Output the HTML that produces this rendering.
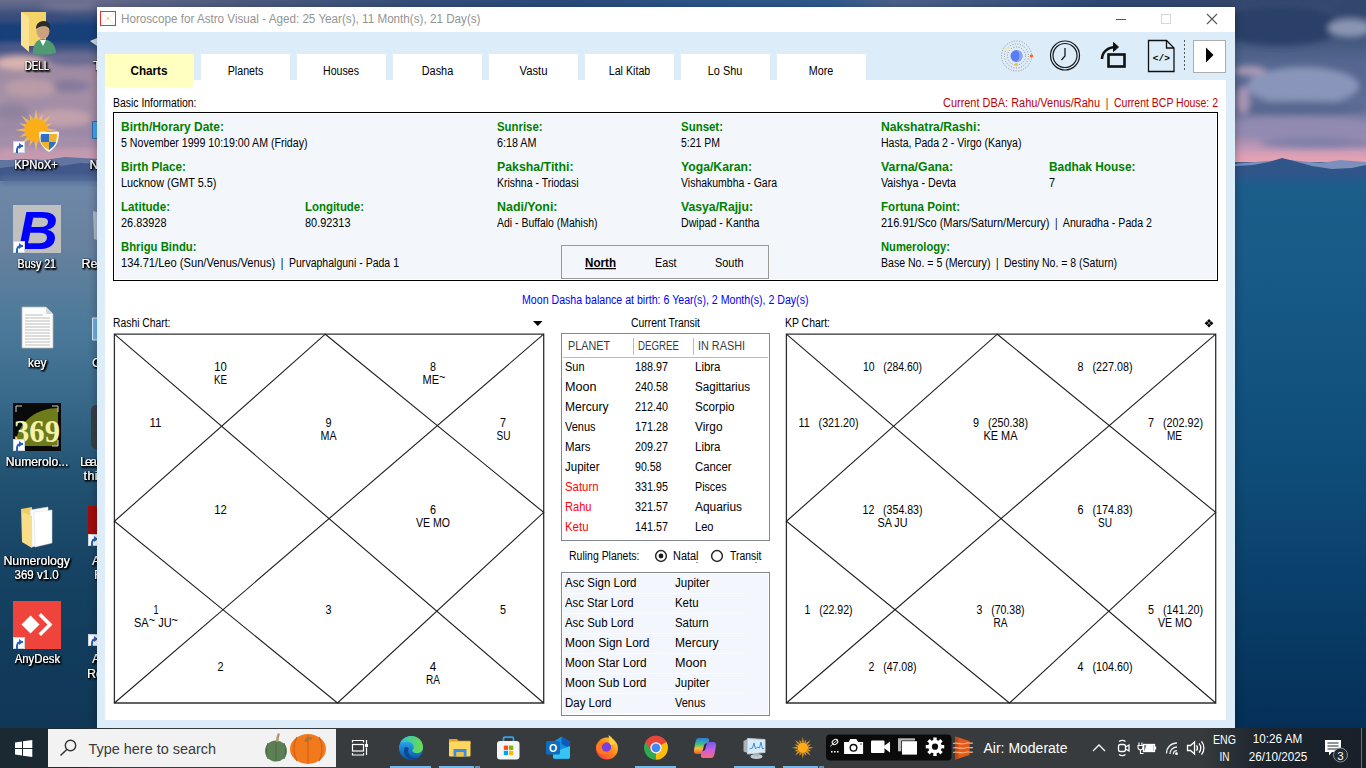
<!DOCTYPE html>
<html lang="en">
<head>
<meta charset="utf-8">
<title>Horoscope for Astro Visual</title>
<style>
*{box-sizing:border-box;margin:0;padding:0}
html,body{width:1366px;height:768px;overflow:hidden;background:#1b4a70;font-family:"Liberation Sans",sans-serif}
#screen{position:relative;width:1366px;height:768px;overflow:hidden}
.abs{position:absolute}
/* desktop wallpaper */
#wallL{left:0;top:0;width:100px;height:728px;overflow:hidden;background:#3a688e}
#wallR{left:1235px;top:0;width:131px;height:728px;overflow:hidden;background:#16547f}
.blob{position:absolute;border-radius:50%;filter:blur(6px)}
/* desktop icons */
.dlabel{position:absolute;color:#fff;font-size:12px;line-height:15px;text-align:center;white-space:nowrap;
 text-shadow:0 1px 2px #000,0 0 3px rgba(0,0,0,.9),1px 1px 1px rgba(0,0,0,.8)}
.sc{position:absolute;width:12px;height:12px;background:#fff;border:1px solid #d0d6de}
.sc:before{content:"";position:absolute;left:2px;top:3px;width:5px;height:6px;border-top:2px solid #2a62b8;border-left:2px solid #2a62b8;border-radius:5px 0 0 0}
.sc:after{content:"";position:absolute;left:5px;top:1px;width:0;height:0;border-left:4px solid #2a62b8;border-top:3px solid transparent;border-bottom:3px solid transparent}
/* app window */
#win{left:97px;top:7px;width:1138px;height:721px;background:#dcecf9;z-index:1;box-shadow:0 1px 9px rgba(0,0,0,.32)}
#wintext{z-index:2}
#taskbar{z-index:3}
#titlebar{left:0;top:0;width:1138px;height:25px;background:#fff}
#content{left:8px;top:73px;width:1121px;height:640px;background:#fff}
.tab{position:absolute;top:47px;width:89px;height:26px;background:#fff}
.tab.sel{height:33px;background:#ffffbf;z-index:3}
#infobox{left:16px;top:105px;width:1105px;height:169px;border:1px solid #000;background:#f3f7fc;box-shadow:inset 0 0 0 1px #fff}
#dirbox{left:464px;top:238px;width:208px;height:34px;border:1px solid #9a9a9a;background:#f3f7fc}
#ttable{left:464px;top:326px;width:209px;height:208px;border:1px solid #828790;background:#fff}
#rtable{left:464px;top:565px;width:209px;height:144px;border:1px solid #828790;background:#f3f6fc;box-shadow:inset 0 0 0 1px #fff}
.rline{position:absolute;left:2px;width:179px;height:1px;background:#fbfdff}
.radio{position:absolute;width:13px;height:13px;border:1px solid #333;border-radius:50%;background:#fff}
.radio.on:after{content:"";position:absolute;left:3px;top:3px;width:5px;height:5px;border-radius:50%;background:#222}
#playbtn{left:1096px;top:33px;width:33px;height:33px;background:#fff;border:1px solid #adadad}
/* taskbar */
#taskbar{left:0;top:728px;width:1366px;height:40px;background:linear-gradient(90deg,#1a2932 0px,#1a2932 75px,#373b3d 125px,#373b3d 1200px,#1c242e 1262px,#182029 1366px)}
#search{left:48px;top:1px;width:288px;height:38px;background:#f2f2f2}
.run{position:absolute;top:38px;height:2px;background:#76b9ed}
svg{position:absolute;left:0;top:0;overflow:visible}
svg text{font-family:"Liberation Sans",sans-serif;white-space:pre}
</style>
</head>
<body>
<div id="screen">

<!-- ===== Desktop wallpaper ===== -->
<div id="wallL" class="abs">
  <svg width="100" height="728" viewBox="0 0 100 728">
    <defs>
      <filter id="c3" x="-30%" y="-30%" width="160%" height="160%"><feGaussianBlur stdDeviation="3"/></filter>
      <filter id="c6" x="-30%" y="-30%" width="160%" height="160%"><feGaussianBlur stdDeviation="6"/></filter>
      <linearGradient id="skyL" x1="0" y1="0" x2="0" y2="1">
        <stop offset="0" stop-color="#6a6d8d"/><stop offset=".07" stop-color="#4c5a82"/><stop offset=".16" stop-color="#18417b"/>
        <stop offset=".25" stop-color="#173f78"/><stop offset=".33" stop-color="#56608a"/><stop offset=".4" stop-color="#9e8aa2"/>
        <stop offset=".6" stop-color="#a58fa6"/><stop offset=".85" stop-color="#9a88a6"/><stop offset=".95" stop-color="#b894ac"/><stop offset="1" stop-color="#c69ab0"/>
      </linearGradient>
      <linearGradient id="seaL" x1="0" y1="0" x2="0" y2="1">
        <stop offset="0" stop-color="#6f88a9"/><stop offset=".12" stop-color="#67819f"/><stop offset=".27" stop-color="#4b7999"/>
        <stop offset=".4" stop-color="#38698a"/><stop offset=".55" stop-color="#215171"/><stop offset=".7" stop-color="#174464"/>
        <stop offset=".85" stop-color="#123c5c"/><stop offset="1" stop-color="#103756"/>
      </linearGradient>
    </defs>
    <rect x="0" y="0" width="100" height="160" fill="url(#skyL)"/>
    <g filter="url(#c3)">
      <ellipse cx="20" cy="63" rx="24" ry="7" fill="#d9b3b1"/>
      <ellipse cx="75" cy="60" rx="25" ry="6" fill="#6a6c93"/>
      <ellipse cx="68" cy="86" rx="22" ry="6" fill="#84799b"/>
      <ellipse cx="30" cy="88" rx="26" ry="9" fill="#b99ca8"/>
      <ellipse cx="62" cy="118" rx="30" ry="9" fill="#c2a0ac"/>
      <ellipse cx="12" cy="112" rx="16" ry="8" fill="#8d829f"/>
      <ellipse cx="40" cy="140" rx="50" ry="6" fill="#a48fa9"/>
      <ellipse cx="30" cy="17" rx="40" ry="4" fill="#3a4c78"/>
      <ellipse cx="70" cy="6" rx="30" ry="3" fill="#7a7a98"/>
      <ellipse cx="15" cy="47" rx="22" ry="4" fill="#50598a"/>
    </g>
    <rect x="0" y="150" width="100" height="9" fill="#c89cb2" opacity=".8" filter="url(#c3)"/>
    <path d="M0 161l20-2 25 1 20-3 35 2v24h-100z" fill="#62749f"/>
    <path d="M0 168l25-3 30 2 25-4 20 1v20h-100z" fill="#41598a"/>
    <rect x="0" y="181" width="100" height="547" fill="url(#seaL)"/>
    <rect x="0" y="177" width="100" height="7" fill="#566f98" filter="url(#c3)"/>
  </svg>
</div>
<div id="wallR" class="abs">
  <svg width="131" height="728" viewBox="1235 0 131 728">
    <defs>
      <filter id="b3" x="-30%" y="-30%" width="160%" height="160%"><feGaussianBlur stdDeviation="3"/></filter>
      <filter id="b5" x="-30%" y="-30%" width="160%" height="160%"><feGaussianBlur stdDeviation="5"/></filter>
      <linearGradient id="skyR" x1="0" y1="0" x2="0" y2="1">
        <stop offset="0" stop-color="#34486f"/><stop offset=".25" stop-color="#44587f"/><stop offset=".38" stop-color="#54668f"/>
        <stop offset=".62" stop-color="#5d6c96"/><stop offset=".8" stop-color="#8c86ad"/><stop offset=".93" stop-color="#c79bb6"/><stop offset="1" stop-color="#eaa2b2"/>
      </linearGradient>
      <linearGradient id="seaR" x1="0" y1="0" x2="0" y2="1">
        <stop offset="0" stop-color="#1b5e8a"/><stop offset=".15" stop-color="#195b88"/><stop offset=".35" stop-color="#125380"/>
        <stop offset=".55" stop-color="#0e4b77"/><stop offset=".8" stop-color="#083c66"/><stop offset="1" stop-color="#052f57"/>
      </linearGradient>
    </defs>
    <rect x="1235" y="0" width="131" height="162" fill="url(#skyR)"/>
    <g filter="url(#b3)">
      <ellipse cx="1280" cy="26" rx="62" ry="20" fill="#2b3f67"/>
      <ellipse cx="1350" cy="28" rx="22" ry="9" fill="#8a95b2"/>
      <ellipse cx="1360" cy="8" rx="30" ry="9" fill="#33476e"/>
      <ellipse cx="1303" cy="86" rx="56" ry="19" fill="#8995ba"/>
      <ellipse cx="1250" cy="71" rx="16" ry="5" fill="#a99ab6"/>
      <ellipse cx="1300" cy="108" rx="70" ry="7" fill="#566890"/>
      <ellipse cx="1300" cy="128" rx="80" ry="11" fill="#928ab1"/>
      <ellipse cx="1320" cy="143" rx="60" ry="5" fill="#7f7fa8"/>
      <ellipse cx="1243" cy="100" rx="7" ry="14" fill="#a994b4"/>
    </g>
    <rect x="1235" y="154" width="131" height="7" fill="#e3a1b4" opacity=".7" filter="url(#b3)"/>
    <path d="M1235 164l30-3 25-1 30 3 20-3 26 2v22h-131z" fill="#7d8fbd"/>
    <path d="M1235 166l18-1 16-3 13-4 12 3 18 5 20 3 20-1 14-3v22h-131z" fill="#2f5589"/>
    <rect x="1235" y="180" width="131" height="548" fill="url(#seaR)"/>
    <rect x="1235" y="176" width="131" height="8" fill="#275a8c" filter="url(#b3)"/>
  </svg>
</div>

<div id="wallT" class="abs" style="left:97px;top:0;width:1138px;height:8px;background:linear-gradient(90deg,#666b8c 0px,#5a6488 60px,#4b5a80 160px,#34507c 320px,#2b4c7c 460px,#2d568a 600px,#2f5a8e 730px,#4c628a 800px,#3e5782 900px,#2e4a76 1000px,#34486f 1138px)"></div>
<!-- ===== Desktop icons ===== -->
<div id="icons" class="abs" style="left:0;top:0;width:97px;height:728px;overflow:hidden">
  <!-- DELL user folder -->
  <svg width="97" height="728" viewBox="0 0 97 728">
    <path d="M21 12h25v34h-17l-8-3z" fill="#f5d36b"/>
    <path d="M21 12l8 5v35l-8-7z" fill="#fbe293"/>
    <path d="M33 54c-1-9 4-15 10-15s13 5 13 14c-6 2-17 2-23 1z" fill="#4f9a72"/>
    <path d="M40 40l3 6 3-6z" fill="#fff"/>
    <ellipse cx="43" cy="31" rx="6.5" ry="8" fill="#caa27e"/>
    <path d="M36 29c0-6 4-8 8-8s7 3 6 9c-2-4-7-6-14-1z" fill="#2b2b2b"/>
    <!-- KPNoX+ sun + shield -->
    <path d="M46.9 128.2L57.0 130.0L46.9 131.8zM46.7 132.5L52.6 136.9L45.4 135.8zM44.9 136.4L50.8 144.8L42.4 138.9zM41.8 139.4L42.9 146.6L38.5 140.7zM37.8 140.9L36.0 151.0L34.2 140.9zM33.5 140.7L29.1 146.6L30.2 139.4zM29.6 138.9L21.2 144.8L27.1 136.4zM26.6 135.8L19.4 136.9L25.3 132.5zM25.1 131.8L15.0 130.0L25.1 128.2zM25.3 127.5L19.4 123.1L26.6 124.2zM27.1 123.6L21.2 115.2L29.6 121.1zM30.2 120.6L29.1 113.4L33.5 119.3zM34.2 119.1L36.0 109.0L37.8 119.1zM38.5 119.3L42.9 113.4L41.8 120.6zM42.4 121.1L50.8 115.2L44.9 123.6zM45.4 124.2L52.6 123.1L46.7 127.5z" fill="#f8c25a" opacity=".8"/>
    <circle cx="36" cy="130" r="11.500" fill="#fbae17"/>
    <path d="M49 132c3 0 7-1 10 0 0 10-3 16-10 20-7-4-10-10-10-20 3-1 7 0 10 0z" fill="#f3f3f3"/>
    <path d="M49 134h8c0 3-.4 5.500-1 8h-7zM41 142h8v8c-4-2-7-5-8-8z" fill="#f2b32c"/>
    <path d="M41 134h8v8h-8c-.5-2.500-.5-5 0-8zM49 142h7c-1 3-4 6-7 8z" fill="#2f6fc4"/>
    <!-- Busy 21 -->
    <rect x="13" y="205" width="48" height="48" fill="#c0c0c0"/>
    <!-- key file -->
    <path d="M22 307h24l7 7v34h-31z" fill="#fdfdfd" stroke="#b5b5b5" stroke-width=".8"/>
    <path d="M46 307v7h7z" fill="#d9d9d9"/>
    <path d="M25 315h18M25 318h25M25 321h25M25 324h25M25 327h25M25 330h25M25 333h25M25 336h25M25 339h25M25 342h25M25 345h25" stroke="#bdbdbd" stroke-width="1"/>
    <!-- 369 -->
    <rect x="13" y="403" width="48" height="48" fill="#0a0a0a"/>
    <path d="M16 440c4-20 22-32 42-32v38h-42z" fill="#6d7b1a"/>
    <path d="M16 406h6M16 406v6M58 406h-6M58 406v6M58 446h-6M58 446v-6" stroke="#cfcfcf" stroke-width="1" fill="none"/>
    <!-- Numerology folder -->
    <path d="M21 509l11-2 1 38-11 -3z" fill="#f2cc62"/>
    <path d="M30 510l18-3v36l-16 4z" fill="#fafafa" stroke="#ddd" stroke-width=".5"/>
    <path d="M34 512l18-2v33l-17 4z" fill="#fff" stroke="#ddd" stroke-width=".5"/>
    <path d="M22 512l10 4v32l-10-6z" fill="#f9de8a"/>
    <!-- AnyDesk -->
    <rect x="13" y="601" width="48" height="48" fill="#ef443b"/>
    <path d="M21.500 624.500l9-9 9 9-9 9z" fill="#fff"/>
    <path d="M38.500 615.500l2.500-2.500 11.500 11.500-11.500 11.500-2.500-2.500 9-9z" fill="#fff"/>
    <!-- partial icons at right edge -->
    <path d="M88 506h9v40h-9z" fill="#a10d0d"/>
    <path d="M92.500 121.500h5v17h-5z" fill="#4aa6ea" stroke="#2a6cb8" stroke-width="1"/>
    <path d="M93 211l4 1v28l-3-1z" fill="#e8eef4" opacity=".55"/>
    <path d="M92.500 318h5v22h-5z" fill="#6ab4ec" stroke="#dfeaf4" stroke-width="1"/>
    <path d="M97 405c-4 0-6 2-6 6v32c0 4 2 6 6 6z" fill="#3a3f46"/>
    <path d="M90 41l7-3v8z" fill="#e8ecf2" opacity=".9"/>
    <defs><filter id="lsh" x="-20%" y="-40%" width="140%" height="200%">
      <feGaussianBlur in="SourceAlpha" stdDeviation="1.100" result="b"/><feOffset in="b" dx=".800" dy="1" result="o"/>
      <feComponentTransfer in="o" result="d"><feFuncA type="linear" slope="1.700"/></feComponentTransfer>
      <feMerge><feMergeNode in="d"/><feMergeNode in="d"/><feMergeNode in="SourceGraphic"/></feMerge></filter></defs>
    <g font-size="12.500" fill="#fff" text-anchor="middle" filter="url(#lsh)">
      <text x="37" y="69.500" textLength="24.500" lengthAdjust="spacingAndGlyphs">DELL</text>
      <text x="36" y="168.500" textLength="43.500" lengthAdjust="spacingAndGlyphs">KPNoX+</text>
      <text x="36.800" y="267.500" textLength="38.500" lengthAdjust="spacingAndGlyphs">Busy 21</text>
      <text x="37.200" y="366.500" textLength="18.500" lengthAdjust="spacingAndGlyphs">key</text>
      <text x="37" y="465.500" textLength="62.500" lengthAdjust="spacingAndGlyphs">Numerolo...</text>
      <text x="36.700" y="564.500" textLength="66.500" lengthAdjust="spacingAndGlyphs">Numerology</text>
      <text x="36.600" y="579" textLength="44" lengthAdjust="spacingAndGlyphs">369 v1.0</text>
      <text x="37.400" y="663" textLength="45.500" lengthAdjust="spacingAndGlyphs">AnyDesk</text>
    </g>
    <g font-size="12.500" fill="#fff" filter="url(#lsh)">
      <text x="93" y="69.500">T</text>
      <text x="89.500" y="168.500">N</text>
      <text x="81.500" y="267.500">Re</text>
      <text x="92" y="366.500">C</text>
      <text x="80" y="465.500" textLength="17">Lea</text>
      <text x="83.500" y="480" textLength="14">thi</text>
      <text x="92" y="564.500">A</text>
      <text x="94" y="579">F</text>
      <text x="92" y="663">A</text>
      <text x="87" y="677.500">Re</text>
    </g>
    <text x="38" y="248.500" font-size="53" font-weight="bold" font-style="italic" fill="#0000ff" text-anchor="middle" textLength="40" lengthAdjust="spacingAndGlyphs">B</text>
    <text x="37" y="442" font-size="31" font-weight="bold" fill="#f4f2ac" text-anchor="middle" textLength="46" lengthAdjust="spacingAndGlyphs" style="font-family:'Liberation Serif',serif">369</text>
  </svg>
  <div class="sc" style="left:13px;top:141px"></div>
  <div class="sc" style="left:13px;top:241px"></div>
  <div class="sc" style="left:13px;top:439px"></div>
  <div class="sc" style="left:13px;top:637px"></div>
  <div class="sc" style="left:88px;top:534px"></div>
  <div class="sc" style="left:88px;top:634px"></div>
</div>

<!-- ===== Application window ===== -->
<div id="win" class="abs">
  <div id="titlebar" class="abs"></div>
  <div class="tab sel" style="left:8px"></div>
  <div class="tab" style="left:104px"></div>
  <div class="tab" style="left:200px"></div>
  <div class="tab" style="left:296px"></div>
  <div class="tab" style="left:392px"></div>
  <div class="tab" style="left:488px"></div>
  <div class="tab" style="left:584px"></div>
  <div class="tab" style="left:680px"></div>
  <div id="content" class="abs"></div>
  <div id="infobox" class="abs"></div>
  <div id="dirbox" class="abs"></div>
  <div id="ttable" class="abs"></div>
  <div id="rtable" class="abs">
    <div class="rline" style="top:20px"></div><div class="rline" style="top:40px"></div><div class="rline" style="top:60px"></div>
    <div class="rline" style="top:80px"></div><div class="rline" style="top:100px"></div><div class="rline" style="top:120px"></div><div class="rline" style="top:140px"></div>
  </div>
  <div id="playbtn" class="abs"></div>
</div>

<!-- all window text + vector graphics, in screen coordinates -->
<svg id="wintext" width="1366" height="768" viewBox="0 0 1366 768">
  <!-- title bar -->
  <rect x="100.500" y="11.500" width="15" height="14" fill="#fff" stroke="#f03030" stroke-width="1"/>
  <path d="M101 12l14 13M115 12l-14 13" stroke="#f4e6d8" stroke-width="1"/><circle cx="108" cy="18.500" r="1" fill="#f5b860"/>
  <text x="121" y="23" font-size="12.500" fill="#939393" textLength="359.500" lengthAdjust="spacingAndGlyphs">Horoscope for Astro Visual - Aged: 25 Year(s), 11 Month(s), 21 Day(s)</text>
  <path d="M1116 19.500h10" stroke="#555" stroke-width="1"/>
  <rect x="1161.500" y="14.500" width="9" height="9" fill="none" stroke="#d6d6d6" stroke-width="1"/>
  <path d="M1207 14l10 10M1217 14l-10 10" stroke="#555" stroke-width="1.100"/>
  <!-- tabs -->
  <g font-size="12.500" text-anchor="middle">
    <text x="149" y="75" font-weight="bold" textLength="37" lengthAdjust="spacingAndGlyphs">Charts</text>
    <text x="245.500" y="75" textLength="35.500" lengthAdjust="spacingAndGlyphs">Planets</text>
    <text x="341" y="75" textLength="36" lengthAdjust="spacingAndGlyphs">Houses</text>
    <text x="437.500" y="75" textLength="31.500" lengthAdjust="spacingAndGlyphs">Dasha</text>
    <text x="533.500" y="75" textLength="28" lengthAdjust="spacingAndGlyphs">Vastu</text>
    <text x="629.500" y="75" textLength="41.500" lengthAdjust="spacingAndGlyphs">Lal Kitab</text>
    <text x="725" y="75" textLength="34.500" lengthAdjust="spacingAndGlyphs">Lo Shu</text>
    <text x="821" y="75" textLength="24.500" lengthAdjust="spacingAndGlyphs">More</text>
  </g>
  <!-- toolbar icons -->
  <g id="tool-solar">
    <circle cx="1016.500" cy="56" r="15" fill="none" stroke="#9a8f8a" stroke-width="1" stroke-dasharray="1 1.600"/>
    <circle cx="1016.500" cy="56" r="12" fill="none" stroke="#9a8f8a" stroke-width="1" stroke-dasharray="1 1.600"/>
    <circle cx="1016.500" cy="56" r="9" fill="none" stroke="#9a8f8a" stroke-width="1" stroke-dasharray="1 1.600"/>
    <circle cx="1016.500" cy="56" r="6" fill="#5b7cf2"/>
    <path d="M1016.500 50a6 6 0 0 1 0 12a7.500 7.500 0 0 0 0-12z" fill="#8ea4ff"/>
    <circle cx="1031.500" cy="56" r="1.700" fill="#f26a1b"/>
    <circle cx="1016.500" cy="64.500" r="1.700" fill="#fbc531"/>
    <circle cx="1007.500" cy="48.500" r="1.700" fill="#fde9a6"/>
  </g>
  <g id="tool-clock" fill="none" stroke="#1a1a1a">
    <circle cx="1065" cy="55.500" r="14.500" stroke-width="1.200"/>
    <circle cx="1065" cy="55.500" r="12" stroke-width="1.200"/>
    <path d="M1065 48v8l-3.500 4" stroke-width="1.300"/>
  </g>
  <g id="tool-rotate" fill="none" stroke="#111">
    <rect x="1108.500" y="54.500" width="16" height="12" stroke-width="2.600"/>
    <path d="M1102 59c0-7 6-12 14-12" stroke-width="2.600"/>
    <path d="M1113.500 42.500l5 4.500-5 4.500z" fill="#111" stroke-width="1"/>
  </g>
  <g id="tool-code">
    <path d="M1148.500 40.500h18l7.500 7.500v23.500h-25.500z" fill="none" stroke="#111" stroke-width="1.300"/>
    <path d="M1166.500 40.500v7.500h7.500" fill="none" stroke="#111" stroke-width="1.300"/>
    <text x="1161.300" y="60.500" font-size="9" font-weight="bold" text-anchor="middle" textLength="17" lengthAdjust="spacingAndGlyphs" style="font-family:'Liberation Mono',monospace">&lt;/&gt;</text>
  </g>
  <path d="M1184.500 40v32" stroke="#555" stroke-width="1" stroke-dasharray="2 2"/>
  <path d="M1206 47.500v15l7.500-7.500z" fill="#000"/>
  <!-- radio buttons -->
  <circle cx="661" cy="556" r="5.400" fill="#fff" stroke="#262626" stroke-width="1.500"/><circle cx="661" cy="556" r="2.400" fill="#1a1a1a"/>
  <circle cx="717" cy="556" r="5.400" fill="#fff" stroke="#262626" stroke-width="1.500"/>
  <path d="M696.500 562.500h2M755.500 562.500h2" stroke="#222" stroke-width="1" stroke-dasharray="1 1"/>
  <!-- dropdown arrow + move icon -->
  <path d="M533 321h9.500l-4.750 5z" fill="#000"/>
  <g fill="#000"><path d="M1209 319l2 2-2 2-2-2zM1209 323.500l2 2-2 2-2-2zM1206.700 321.200l2 2-2 2-2-2zM1211.300 321.200l2 2-2 2-2-2z"/></g>
  <!-- transit table header lines -->
  <path d="M633.500 338v17M693.500 338v17" stroke="#b4bccb" stroke-width="1"/>
  <path d="M563 357.500h205" stroke="#b4bccb" stroke-width="1"/>
  <!-- charts -->
  <rect x="114.4" y="334.2" width="429.30000000000007" height="368.8" fill="#fff"/>
<path d="M114.4 334.2H543.7V703H114.4Z" fill="none" stroke="#303030" stroke-width="1.3"/>
<path d="M114.4 334.2L543.7 703 M543.7 334.2L114.4 703 M325.3 334.2L543.7 512.4L337.5 703L114.4 521.3Z" fill="none" stroke="#1e1e1e" stroke-width="1.1"/>
  <rect x="786.4" y="334.2" width="429.30000000000007" height="368.8" fill="#fff"/>
<path d="M786.4 334.2H1215.7V703H786.4Z" fill="none" stroke="#303030" stroke-width="1.3"/>
<path d="M786.4 334.2L1215.7 703 M1215.7 334.2L786.4 703 M997.3 334.2L1215.7 512.4L1009.5 703L786.4 521.3Z" fill="none" stroke="#1e1e1e" stroke-width="1.1"/>
  <g id="infotext">
  <text x="121" y="131" font-size="12.5" fill="#008000" font-weight="bold" textLength="103" lengthAdjust="spacingAndGlyphs">Birth/Horary Date:</text>
<text x="121" y="147" font-size="12.5" textLength="186.5" lengthAdjust="spacingAndGlyphs">5 November 1999 10:19:00 AM (Friday)</text>
<text x="121" y="171" font-size="12.5" fill="#008000" font-weight="bold" textLength="65" lengthAdjust="spacingAndGlyphs">Birth Place:</text>
<text x="121" y="187" font-size="12.5" textLength="95.5" lengthAdjust="spacingAndGlyphs">Lucknow (GMT 5.5)</text>
<text x="121" y="211" font-size="12.5" fill="#008000" font-weight="bold" textLength="49" lengthAdjust="spacingAndGlyphs">Latitude:</text>
<text x="121" y="227" font-size="12.5" textLength="45.5" lengthAdjust="spacingAndGlyphs">26.83928</text>
<text x="305" y="211" font-size="12.5" fill="#008000" font-weight="bold" textLength="59" lengthAdjust="spacingAndGlyphs">Longitude:</text>
<text x="305" y="227" font-size="12.5" textLength="45.5" lengthAdjust="spacingAndGlyphs">80.92313</text>
<text x="121" y="251" font-size="12.5" fill="#008000" font-weight="bold" textLength="75.5" lengthAdjust="spacingAndGlyphs">Bhrigu Bindu:</text>
<text y="267" font-size="12.5" xml:space="preserve"><tspan x="121" textLength="154.2" lengthAdjust="spacingAndGlyphs">134.71/Leo (Sun/Venus/Venus)</tspan><tspan x="275.2" textLength="13.8" lengthAdjust="spacingAndGlyphs">  |  </tspan><tspan x="289" textLength="110" lengthAdjust="spacingAndGlyphs">Purvaphalguni - Pada 1</tspan></text>
<text x="497" y="131" font-size="12.5" fill="#008000" font-weight="bold" textLength="45.5" lengthAdjust="spacingAndGlyphs">Sunrise:</text>
<text x="497" y="147" font-size="12.5" textLength="39.5" lengthAdjust="spacingAndGlyphs">6:18 AM</text>
<text x="497" y="171" font-size="12.5" fill="#008000" font-weight="bold" textLength="76.5" lengthAdjust="spacingAndGlyphs">Paksha/Tithi:</text>
<text x="497" y="187" font-size="12.5" textLength="81.5" lengthAdjust="spacingAndGlyphs">Krishna - Triodasi</text>
<text x="497" y="211" font-size="12.5" fill="#008000" font-weight="bold" textLength="60.5" lengthAdjust="spacingAndGlyphs">Nadi/Yoni:</text>
<text x="497" y="227" font-size="12.5" textLength="100.5" lengthAdjust="spacingAndGlyphs">Adi - Buffalo (Mahish)</text>
<text x="681" y="131" font-size="12.5" fill="#008000" font-weight="bold" textLength="42" lengthAdjust="spacingAndGlyphs">Sunset:</text>
<text x="681" y="147" font-size="12.5" textLength="39" lengthAdjust="spacingAndGlyphs">5:21 PM</text>
<text x="681" y="171" font-size="12.5" fill="#008000" font-weight="bold" textLength="71" lengthAdjust="spacingAndGlyphs">Yoga/Karan:</text>
<text x="681" y="187" font-size="12.5" textLength="96" lengthAdjust="spacingAndGlyphs">Vishakumbha - Gara</text>
<text x="681" y="211" font-size="12.5" fill="#008000" font-weight="bold" textLength="72" lengthAdjust="spacingAndGlyphs">Vasya/Rajju:</text>
<text x="681" y="227" font-size="12.5" textLength="78.5" lengthAdjust="spacingAndGlyphs">Dwipad - Kantha</text>
<text x="881" y="131" font-size="12.5" fill="#008000" font-weight="bold" textLength="99.5" lengthAdjust="spacingAndGlyphs">Nakshatra/Rashi:</text>
<text x="881" y="147" font-size="12.5" textLength="140.5" lengthAdjust="spacingAndGlyphs">Hasta, Pada 2 - Virgo (Kanya)</text>
<text x="881" y="171" font-size="12.5" fill="#008000" font-weight="bold" textLength="72" lengthAdjust="spacingAndGlyphs">Varna/Gana:</text>
<text x="881" y="187" font-size="12.5" textLength="75" lengthAdjust="spacingAndGlyphs">Vaishya - Devta</text>
<text x="1049" y="171" font-size="12.5" fill="#008000" font-weight="bold" textLength="86.5" lengthAdjust="spacingAndGlyphs">Badhak House:</text>
<text x="1049" y="187" font-size="12.5" textLength="6" lengthAdjust="spacingAndGlyphs">7</text>
<text x="881" y="211" font-size="12.5" fill="#008000" font-weight="bold" textLength="79" lengthAdjust="spacingAndGlyphs">Fortuna Point:</text>
<text y="227" font-size="12.5" xml:space="preserve"><tspan x="881" textLength="168.5" lengthAdjust="spacingAndGlyphs">216.91/Sco (Mars/Saturn/Mercury)</tspan><tspan x="1049.5" textLength="13.3" lengthAdjust="spacingAndGlyphs">  |  </tspan><tspan x="1062.8" textLength="89.2" lengthAdjust="spacingAndGlyphs">Anuradha - Pada 2</tspan></text>
<text x="881" y="251" font-size="12.5" fill="#008000" font-weight="bold" textLength="69" lengthAdjust="spacingAndGlyphs">Numerology:</text>
<text y="267" font-size="12.5" xml:space="preserve"><tspan x="881" textLength="109.4" lengthAdjust="spacingAndGlyphs">Base No. = 5 (Mercury)</tspan><tspan x="990.4" textLength="13.6" lengthAdjust="spacingAndGlyphs">  |  </tspan><tspan x="1004" textLength="113" lengthAdjust="spacingAndGlyphs">Destiny No. = 8 (Saturn)</tspan></text>
<text x="113" y="107" font-size="12.5" textLength="83.5" lengthAdjust="spacingAndGlyphs">Basic Information:</text>
<text y="107" font-size="12.5" fill="#c00000" xml:space="preserve"><tspan x="943" textLength="157" lengthAdjust="spacingAndGlyphs">Current DBA: Rahu/Venus/Rahu</tspan><tspan x="1100" textLength="14" lengthAdjust="spacingAndGlyphs">  |  </tspan><tspan x="1114" textLength="104" lengthAdjust="spacingAndGlyphs">Current BCP House: 2</tspan></text>
<text x="522" y="303.5" font-size="12.5" fill="#0000ff" textLength="286.5" lengthAdjust="spacingAndGlyphs">Moon Dasha balance at birth: 6 Year(s), 2 Month(s), 2 Day(s)</text>
<text x="113" y="327" font-size="12.5" textLength="57.5" lengthAdjust="spacingAndGlyphs">Rashi Chart:</text>
<text x="631" y="327" font-size="12.5" textLength="69" lengthAdjust="spacingAndGlyphs">Current Transit</text>
<text x="785" y="327" font-size="12.5" textLength="45" lengthAdjust="spacingAndGlyphs">KP Chart:</text>
<text x="585" y="267" font-size="12.5" font-weight="bold" textLength="31" lengthAdjust="spacingAndGlyphs" text-decoration="underline">North</text>
<text x="655" y="267" font-size="12.5" textLength="21.5" lengthAdjust="spacingAndGlyphs">East</text>
<text x="715" y="267" font-size="12.5" textLength="28.5" lengthAdjust="spacingAndGlyphs">South</text>
<text x="569" y="560" font-size="12.5" textLength="70.5" lengthAdjust="spacingAndGlyphs">Ruling Planets:</text>
<text x="673" y="560" font-size="12.5" textLength="25.5" lengthAdjust="spacingAndGlyphs">Natal</text>
<text x="730" y="560" font-size="12.5" textLength="31.5" lengthAdjust="spacingAndGlyphs">Transit</text>
  </g>
  <g id="rashitext">
  <text x="220.5" y="371" font-size="12.5" text-anchor="middle" textLength="12.5" lengthAdjust="spacingAndGlyphs">10</text>
<text x="220.5" y="384" font-size="12.5" text-anchor="middle" textLength="13" lengthAdjust="spacingAndGlyphs">KE</text>
<text x="433" y="371" font-size="12.5" text-anchor="middle" textLength="6" lengthAdjust="spacingAndGlyphs">8</text>
<text x="434" y="384" font-size="12.5" text-anchor="middle" textLength="23" lengthAdjust="spacingAndGlyphs">ME<tspan dy="-3">~</tspan></text>
<text x="155.5" y="427" font-size="12.5" text-anchor="middle" textLength="12" lengthAdjust="spacingAndGlyphs">11</text>
<text x="328.5" y="427" font-size="12.5" text-anchor="middle" textLength="6" lengthAdjust="spacingAndGlyphs">9</text>
<text x="328.5" y="440" font-size="12.5" text-anchor="middle" textLength="16" lengthAdjust="spacingAndGlyphs">MA</text>
<text x="503" y="427" font-size="12.5" text-anchor="middle" textLength="6" lengthAdjust="spacingAndGlyphs">7</text>
<text x="503.5" y="440" font-size="12.5" text-anchor="middle" textLength="14" lengthAdjust="spacingAndGlyphs">SU</text>
<text x="220.5" y="514" font-size="12.5" text-anchor="middle" textLength="12.5" lengthAdjust="spacingAndGlyphs">12</text>
<text x="433" y="514" font-size="12.5" text-anchor="middle" textLength="6" lengthAdjust="spacingAndGlyphs">6</text>
<text x="433" y="527" font-size="12.5" text-anchor="middle" textLength="34" lengthAdjust="spacingAndGlyphs">VE MO</text>
<text x="156" y="614" font-size="12.5" text-anchor="middle" textLength="5" lengthAdjust="spacingAndGlyphs">1</text>
<text x="156" y="627" font-size="12.5" text-anchor="middle" textLength="44" lengthAdjust="spacingAndGlyphs">SA<tspan dy="-3">~</tspan><tspan dy="3"> </tspan>JU<tspan dy="-3">~</tspan></text>
<text x="328.5" y="614" font-size="12.5" text-anchor="middle" textLength="6" lengthAdjust="spacingAndGlyphs">3</text>
<text x="503" y="614" font-size="12.5" text-anchor="middle" textLength="6" lengthAdjust="spacingAndGlyphs">5</text>
<text x="220.5" y="671" font-size="12.5" text-anchor="middle" textLength="6" lengthAdjust="spacingAndGlyphs">2</text>
<text x="433" y="671" font-size="12.5" text-anchor="middle" textLength="6.5" lengthAdjust="spacingAndGlyphs">4</text>
<text x="433" y="684" font-size="12.5" text-anchor="middle" textLength="14" lengthAdjust="spacingAndGlyphs">RA</text>
  </g>
  <g id="kptext">
  <text x="892.5" y="371" xml:space="preserve" font-size="12.5" text-anchor="middle" textLength="59" lengthAdjust="spacingAndGlyphs">10   (284.60)</text>
<text x="1105" y="371" xml:space="preserve" font-size="12.5" text-anchor="middle" textLength="55" lengthAdjust="spacingAndGlyphs">8   (227.08)</text>
<text x="828.5" y="427" xml:space="preserve" font-size="12.5" text-anchor="middle" textLength="60" lengthAdjust="spacingAndGlyphs">11   (321.20)</text>
<text x="1000.5" y="427" xml:space="preserve" font-size="12.5" text-anchor="middle" textLength="55" lengthAdjust="spacingAndGlyphs">9   (250.38)</text>
<text x="1000.5" y="440" font-size="12.5" text-anchor="middle" textLength="34" lengthAdjust="spacingAndGlyphs">KE MA</text>
<text x="1175.5" y="427" xml:space="preserve" font-size="12.5" text-anchor="middle" textLength="55" lengthAdjust="spacingAndGlyphs">7   (202.92)</text>
<text x="1174.5" y="440" font-size="12.5" text-anchor="middle" textLength="15" lengthAdjust="spacingAndGlyphs">ME</text>
<text x="892.5" y="514" xml:space="preserve" font-size="12.5" text-anchor="middle" textLength="60" lengthAdjust="spacingAndGlyphs">12   (354.83)</text>
<text x="892.5" y="527" font-size="12.5" text-anchor="middle" textLength="30" lengthAdjust="spacingAndGlyphs">SA JU</text>
<text x="1105" y="514" xml:space="preserve" font-size="12.5" text-anchor="middle" textLength="55" lengthAdjust="spacingAndGlyphs">6   (174.83)</text>
<text x="1105" y="527" font-size="12.5" text-anchor="middle" textLength="14" lengthAdjust="spacingAndGlyphs">SU</text>
<text x="828.5" y="614" xml:space="preserve" font-size="12.5" text-anchor="middle" textLength="48" lengthAdjust="spacingAndGlyphs">1   (22.92)</text>
<text x="1000.5" y="614" xml:space="preserve" font-size="12.5" text-anchor="middle" textLength="48" lengthAdjust="spacingAndGlyphs">3   (70.38)</text>
<text x="1000.5" y="627" font-size="12.5" text-anchor="middle" textLength="14" lengthAdjust="spacingAndGlyphs">RA</text>
<text x="1175.5" y="614" xml:space="preserve" font-size="12.5" text-anchor="middle" textLength="55" lengthAdjust="spacingAndGlyphs">5   (141.20)</text>
<text x="1175" y="627" font-size="12.5" text-anchor="middle" textLength="34" lengthAdjust="spacingAndGlyphs">VE MO</text>
<text x="892.5" y="671" xml:space="preserve" font-size="12.5" text-anchor="middle" textLength="48" lengthAdjust="spacingAndGlyphs">2   (47.08)</text>
<text x="1105" y="671" xml:space="preserve" font-size="12.5" text-anchor="middle" textLength="55" lengthAdjust="spacingAndGlyphs">4   (104.60)</text>
  </g>
  <g id="transittext">
  <text x="568" y="350" font-size="12" fill="#3c3c3c" textLength="42" lengthAdjust="spacingAndGlyphs">PLANET</text>
<text x="638" y="350" font-size="12" fill="#3c3c3c" textLength="41" lengthAdjust="spacingAndGlyphs">DEGREE</text>
<text x="698" y="350" font-size="12" fill="#3c3c3c" textLength="47" lengthAdjust="spacingAndGlyphs">IN RASHI</text>
<text x="565" y="370.5" font-size="12" textLength="19.5" lengthAdjust="spacingAndGlyphs">Sun</text>
<text x="635" y="370.5" font-size="12" textLength="33" lengthAdjust="spacingAndGlyphs">188.97</text>
<text x="695" y="370.5" font-size="12" textLength="25.5" lengthAdjust="spacingAndGlyphs">Libra</text>
<text x="565" y="390.5" font-size="12" textLength="31.5" lengthAdjust="spacingAndGlyphs">Moon</text>
<text x="635" y="390.5" font-size="12" textLength="33" lengthAdjust="spacingAndGlyphs">240.58</text>
<text x="695" y="390.5" font-size="12" textLength="55" lengthAdjust="spacingAndGlyphs">Sagittarius</text>
<text x="565" y="410.5" font-size="12" textLength="43.5" lengthAdjust="spacingAndGlyphs">Mercury</text>
<text x="635" y="410.5" font-size="12" textLength="33" lengthAdjust="spacingAndGlyphs">212.40</text>
<text x="695" y="410.5" font-size="12" textLength="39.5" lengthAdjust="spacingAndGlyphs">Scorpio</text>
<text x="565" y="430.5" font-size="12" textLength="30.5" lengthAdjust="spacingAndGlyphs">Venus</text>
<text x="635" y="430.5" font-size="12" textLength="33" lengthAdjust="spacingAndGlyphs">171.28</text>
<text x="695" y="430.5" font-size="12" textLength="27.5" lengthAdjust="spacingAndGlyphs">Virgo</text>
<text x="565" y="450.5" font-size="12" textLength="25.5" lengthAdjust="spacingAndGlyphs">Mars</text>
<text x="635" y="450.5" font-size="12" textLength="33" lengthAdjust="spacingAndGlyphs">209.27</text>
<text x="695" y="450.5" font-size="12" textLength="25.5" lengthAdjust="spacingAndGlyphs">Libra</text>
<text x="565" y="470.5" font-size="12" textLength="34.5" lengthAdjust="spacingAndGlyphs">Jupiter</text>
<text x="635" y="470.5" font-size="12" textLength="26.5" lengthAdjust="spacingAndGlyphs">90.58</text>
<text x="695" y="470.5" font-size="12" textLength="36.5" lengthAdjust="spacingAndGlyphs">Cancer</text>
<text x="565" y="490.5" font-size="12" fill="#ff0000" textLength="33.5" lengthAdjust="spacingAndGlyphs">Saturn</text>
<text x="635" y="490.5" font-size="12" textLength="33" lengthAdjust="spacingAndGlyphs">331.95</text>
<text x="695" y="490.5" font-size="12" textLength="31.5" lengthAdjust="spacingAndGlyphs">Pisces</text>
<text x="565" y="510.5" font-size="12" fill="#ff0000" textLength="26.5" lengthAdjust="spacingAndGlyphs">Rahu</text>
<text x="635" y="510.5" font-size="12" textLength="33" lengthAdjust="spacingAndGlyphs">321.57</text>
<text x="695" y="510.5" font-size="12" textLength="47" lengthAdjust="spacingAndGlyphs">Aquarius</text>
<text x="565" y="530.5" font-size="12" fill="#ff0000" textLength="23.5" lengthAdjust="spacingAndGlyphs">Ketu</text>
<text x="635" y="530.5" font-size="12" textLength="33" lengthAdjust="spacingAndGlyphs">141.57</text>
<text x="695" y="530.5" font-size="12" textLength="18.5" lengthAdjust="spacingAndGlyphs">Leo</text>
  </g>
  <g id="rulingtext">
  <text x="565" y="587" font-size="12" textLength="71.5" lengthAdjust="spacingAndGlyphs">Asc Sign Lord</text>
<text x="675" y="587" font-size="12" textLength="34.5" lengthAdjust="spacingAndGlyphs">Jupiter</text>
<text x="565" y="607" font-size="12" textLength="68.5" lengthAdjust="spacingAndGlyphs">Asc Star Lord</text>
<text x="675" y="607" font-size="12" textLength="23.5" lengthAdjust="spacingAndGlyphs">Ketu</text>
<text x="565" y="627" font-size="12" textLength="68.5" lengthAdjust="spacingAndGlyphs">Asc Sub Lord</text>
<text x="675" y="627" font-size="12" textLength="33.5" lengthAdjust="spacingAndGlyphs">Saturn</text>
<text x="565" y="647" font-size="12" textLength="84.5" lengthAdjust="spacingAndGlyphs">Moon Sign Lord</text>
<text x="675" y="647" font-size="12" textLength="43.5" lengthAdjust="spacingAndGlyphs">Mercury</text>
<text x="565" y="667" font-size="12" textLength="81.5" lengthAdjust="spacingAndGlyphs">Moon Star Lord</text>
<text x="675" y="667" font-size="12" textLength="31.5" lengthAdjust="spacingAndGlyphs">Moon</text>
<text x="565" y="687" font-size="12" textLength="81.5" lengthAdjust="spacingAndGlyphs">Moon Sub Lord</text>
<text x="675" y="687" font-size="12" textLength="34.5" lengthAdjust="spacingAndGlyphs">Jupiter</text>
<text x="565" y="707" font-size="12" textLength="46.5" lengthAdjust="spacingAndGlyphs">Day Lord</text>
<text x="675" y="707" font-size="12" textLength="30.5" lengthAdjust="spacingAndGlyphs">Venus</text>
  </g>
</svg>

<!-- ===== Taskbar ===== -->
<div id="taskbar" class="abs">
  <div id="search" class="abs"></div>
  <div class="run" style="left:390px;width:41px"></div>
  <div class="run" style="left:439px;width:35px"></div>
  <div class="run" style="left:475px;width:5px;opacity:.7"></div>
  <div class="run" style="left:635px;width:41px"></div>
  <div class="run" style="left:734px;width:41px"></div>
  <div class="run" style="left:783px;width:35px"></div>
  <div class="run" style="left:819px;width:5px;opacity:.7"></div>
  <svg width="1366" height="40" viewBox="0 728 1366 40">
    <!-- start -->
    <path d="M15 742.500l7-1v6.500h-7zM23 741.300l9.300-1.300v8h-9.300zM15 749h7v6.500l-7-1zM23 749h9.300v8l-9.300-1.300z" fill="#fff"/>
    <!-- search icon + text -->
    <circle cx="70.500" cy="745.500" r="5.200" fill="none" stroke="#333" stroke-width="1.400"/>
    <path d="M66.800 749.500l-6.300 6" stroke="#333" stroke-width="1.500"/>
    <text x="88.500" y="753.500" font-size="15.500" fill="#3a3a3a" textLength="127.500" lengthAdjust="spacingAndGlyphs">Type here to search</text>
    <!-- pumpkins -->
    <ellipse cx="276" cy="751" rx="11" ry="10.500" fill="#5d7f56"/>
    <path d="M268 743c-2 5-2 12 0 16M276 741v20M284 743c2 5 2 12 0 16" stroke="#4a6a45" stroke-width="1" fill="none"/>
    <path d="M276 742c0-4 1-7 2-9l2 1c-1 2-1.500 5-1.500 8z" fill="#b7936b"/>
    <ellipse cx="308" cy="749" rx="18" ry="15" fill="#f07a1c"/>
    <path d="M297 737c-4 7-4 17 0 24M308 735v28M319 737c4 7 4 17 0 24" stroke="#d9600e" stroke-width="1.200" fill="none"/>
    <path d="M305 742c-1-3 1-5 4-5s4 1 3 3c-2-1-4 0-4 2z" fill="#a8743e"/>
    <!-- task view -->
    <g fill="none" stroke="#fff" stroke-width="1.200"><path d="M352.500 742.500v-2h11v2M352.500 753v2h11v-2"/><rect x="352.500" y="744.500" width="11" height="6.500"/><path d="M366.500 740v4M366.500 747.500v7.500"/></g>
    <rect x="365" y="744" width="3" height="3" fill="#fff"/>
    <!-- edge -->
    <defs>
      <linearGradient id="edgA" x1="0" y1="0" x2="0" y2="1"><stop offset="0" stop-color="#35c1f1"/><stop offset=".55" stop-color="#1b7fd4"/><stop offset="1" stop-color="#0c54a0"/></linearGradient>
      <linearGradient id="edgB" x1="0" y1="0" x2="1" y2="0"><stop offset="0" stop-color="#2bc3d2"/><stop offset="1" stop-color="#6fdc45"/></linearGradient>
    </defs>
    <circle cx="411" cy="748" r="12" fill="url(#edgA)"/>
    <path d="M400.500 742.500c3-5 8-7 13-6.300 6 1 9.500 6 9.500 11 0 3.500-2.500 6-6 6-2.500 0-4.500-1-5-3 1.500-1 2-2.500 1.500-4.500-.8-2.500-3.500-4-6.500-4-2.500 0-5 .3-6.500 .8z" fill="url(#edgB)"/>
    <path d="M405 747c-2 4-1 8 2.500 11 3 2 7 2 10 0-4 .5-7.500-1-9-4.500-.8-2-.5-4 .5-5.500-1.500-.8-3-1-4-1z" fill="#0b4a92"/>
    <!-- explorer -->
    <path d="M449 739h8l1.500 1.800h12v3h-21.500z" fill="#e6a01a"/>
    <rect x="449" y="741.500" width="21.500" height="15" rx="1" fill="#ffd75e"/>
    <path d="M453.500 749h13v7.500h-3v-4.300h-7v4.300h-3z" fill="#3b8ee8"/>
    <path d="M456.500 752.200h7v4.300h-7z" fill="#f3c343"/>
    <!-- store -->
    <path d="M503.500 741.500v-3c0-.8 .5-1.300 1.300-1.300h7.400c.8 0 1.300 .5 1.300 1.300v3" fill="none" stroke="#2ea3e8" stroke-width="1.800"/>
    <rect x="497" y="741" width="22.500" height="18.500" rx="3" fill="#f5f5f5"/>
    <rect x="503.800" y="745.600" width="4.300" height="4.300" fill="#f25022"/><rect x="509" y="745.600" width="4.300" height="4.300" fill="#7fba00"/>
    <rect x="503.800" y="750.800" width="4.300" height="4.300" fill="#00a4ef"/><rect x="509" y="750.800" width="4.300" height="4.300" fill="#ffb900"/>
    <!-- outlook -->
    <path d="M553 742l8.500-5.500 8.500 5.500v15c0 1-.8 1.700-1.700 1.700h-13.600c-1 0-1.700-.8-1.700-1.700z" fill="#1490df"/>
    <path d="M561.500 736.500l8.500 5.500v6.500l-8.500-4.500z" fill="#0a5cbd"/>
    <path d="M553 752.500l17-6.500v11c0 1-.8 1.700-1.700 1.700h-13.600c-1 0-1.700-.8-1.700-1.700z" fill="#35c5f4"/>
    <rect x="546" y="741" width="14" height="13.500" rx="1.500" fill="#0f6cbd"/>
    <text x="553" y="751.700" font-size="10.500" font-weight="bold" fill="#fff" text-anchor="middle">O</text>
    <!-- firefox -->
    <defs><linearGradient id="ffx" x1="1" y1="0" x2="0" y2="1"><stop offset="0" stop-color="#ffe14a"/><stop offset=".45" stop-color="#ff8a1a"/><stop offset="1" stop-color="#f0304e"/></linearGradient></defs>
    <circle cx="607" cy="748.500" r="11" fill="url(#ffx)"/>
    <path d="M608.500 735c3.500 2 6 5.500 6.500 9l-7 1.500c1-3 1.500-7 .5-10.500z" fill="#ffd03a"/>
    <circle cx="606.500" cy="747" r="4.700" fill="#7a3fe0"/>
    <path d="M596.800 744.500c3-3.500 7.500-3.500 10-1.500-3.500 0-5.500 2-5.500 4.500 0 4 4.500 6 8.500 4.500-3 3.500-9.500 3.500-12.500-1-1.500-2-1.500-4.500-.5-6.500z" fill="#ff7b1c"/>
    <!-- chrome -->
    <path d="M656 747.8L645.61 741.80A12 12 0 0 1 666.39 741.80z" fill="#e8453c"/>
    <path d="M656 747.8L666.39 741.80A12 12 0 0 1 656.00 759.80z" fill="#fbbd05"/>
    <path d="M656 747.8L656.00 759.80A12 12 0 0 1 645.61 741.80z" fill="#31a853"/>
    <path d="M656 742.200h10.600a12 12 0 0 0-21-0.400l5.400 9.200z" fill="#e8453c"/>
    <circle cx="656" cy="747.800" r="5.600" fill="#fff"/><circle cx="656" cy="747.800" r="4.400" fill="#4386f5"/>
    <!-- copilot -->
    <defs>
      <linearGradient id="cpA" x1="0" y1="0" x2="0" y2="1"><stop offset="0" stop-color="#2b7de8"/><stop offset=".4" stop-color="#3cc47a"/><stop offset=".65" stop-color="#f5c13a"/><stop offset="1" stop-color="#f0552a"/></linearGradient>
      <linearGradient id="cpB" x1="0" y1="0" x2="0" y2="1"><stop offset="0" stop-color="#6f5cf0"/><stop offset=".5" stop-color="#c95fe0"/><stop offset="1" stop-color="#f7697a"/></linearGradient>
    </defs>
    <path d="M699 738h7.500c2 0 3 1 2.500 3l-3 10c-.6 2-2 3-4 3h-5c-2.500 0-3.500-1.500-3-4l1.500-8c.5-2.500 1.500-4 3.500-4z" fill="url(#cpA)"/>
    <path d="M711 758h-7.500c-2 0-3-1-2.500-3l3-10c.6-2 2-3 4-3h5c2.500 0 3.500 1.500 3 4l-1.500 8c-.5 2.500-1.500 4-3.500 4z" fill="url(#cpB)"/>
    <path d="M704.500 744.500l2.500-1.500-2 7-2.500 1.500z" fill="#2a2f36"/>
    <!-- monitor -->
    <path d="M743.500 741l4-2v14l-4-1.500z" fill="#aab3bc"/>
    <path d="M747.500 738.500l17.500 1v13l-17.500 1.500z" fill="#d9ebf8" stroke="#c3ccd4" stroke-width="1"/>
    <path d="M749.500 749l3-1 1.500-5 1.500 6 2-2 2 1 1.500-6 1.500 7 1.500-1" stroke="#3a8fd8" stroke-width="1" fill="none"/>
    <ellipse cx="756.500" cy="756.500" rx="6" ry="2.500" fill="#c8cdd2"/><path d="M754 753.500h5v3h-5z" fill="#b0b6bc"/>
    <!-- sun -->
    <path d="M808.2 746.7L813.8 747.8L808.2 748.9zM808.2 748.9L811.1 751.2L807.4 750.9zM807.4 750.8L810.6 755.6L805.8 752.4zM805.9 752.4L806.2 756.1L803.9 753.2zM803.9 753.2L802.8 758.8L801.7 753.2zM801.7 753.2L799.4 756.1L799.7 752.4zM799.8 752.4L795.0 755.6L798.2 750.8zM798.2 750.9L794.5 751.2L797.4 748.9zM797.4 748.9L791.8 747.8L797.4 746.7zM797.4 746.7L794.5 744.4L798.2 744.7zM798.2 744.8L795.0 740.0L799.8 743.2zM799.7 743.2L799.4 739.5L801.7 742.4zM801.7 742.4L802.8 736.8L803.9 742.4zM803.9 742.4L806.2 739.5L805.9 743.2zM805.8 743.2L810.6 740.0L807.4 744.8zM807.4 744.7L811.1 744.4L808.2 746.7z" fill="#f5a623" opacity=".85"/>
    <circle cx="802.800" cy="747.800" r="5.300" fill="#fbab18"/>
    <!-- tray black pill -->
    <rect x="826" y="734.500" width="125.500" height="26" rx="4" fill="#0b0b0b"/>
    <g fill="#fff">
      <ellipse cx="835" cy="742" rx="3" ry="2.300" fill="none" stroke="#fff" stroke-width="1" transform="rotate(-35 835 742)"/><path d="M830 746.500l8-7" stroke="#fff" stroke-width=".800"/><path d="M831 751h1.600v1.600h-1.600zM834 751h1.600v1.600h-1.600zM837 751h1.600v1.600h-1.600z"/>
      <path d="M844 742h4.500l1.800-3h6l1.800 3h5v12h-19z"/><circle cx="853.500" cy="747.800" r="4" fill="#0b0b0b"/><circle cx="853.500" cy="747.800" r="2.600" fill="#fff"/><circle cx="861" cy="744" r=".700" fill="#0b0b0b"/>
      <rect x="871" y="740.500" width="13.500" height="12.500" rx="1"/><path d="M884 746l6-4.500v11l-6-4.500z"/>
      <rect x="898" y="738.300" width="17" height="13" fill="#b9b9b9"/><rect x="901.300" y="740.500" width="16.400" height="14.800" fill="#0b0b0b"/><rect x="902" y="741.200" width="15" height="13.400"/>
      <path d="M941.60 745.06L944.23 744.94L944.23 748.46L941.60 748.34L940.83 750.21L942.77 751.98L940.28 754.47L938.51 752.53L936.64 753.30L936.76 755.93L933.24 755.93L933.36 753.30L931.49 752.53L929.72 754.47L927.23 751.98L929.17 750.21L928.40 748.34L925.77 748.46L925.77 744.94L928.40 745.06L929.17 743.19L927.23 741.42L929.72 738.93L931.49 740.87L933.36 740.10L933.24 737.47L936.76 737.47L936.64 740.10L938.51 740.87L940.28 738.93L942.77 741.42L940.83 743.19z"/><circle cx="935" cy="746.7" r="3.100" fill="#0b0b0b"/>
    </g>
    <!-- orange stack -->
    <path d="M955.500 736.500l14 4.500v14l-14 4.500z" fill="#e05a1c"/>
    <path d="M955.500 736.500l3 1v21l-3 1z" fill="#c44a12"/>
    <g fill="none" stroke="#f7a877" stroke-width="1.300"><path d="M953 743.500c4-1.500 8 1.500 12 0s5 .5 8-.5M953 748c4-1.500 8 1.500 12 0s5 .5 8-.5M953 752.500c4-1.500 8 1.500 12 0s5 .5 8-.5"/></g>
    <text x="983.500" y="752.500" font-size="15.500" fill="#fff" textLength="84" lengthAdjust="spacingAndGlyphs">Air: Moderate</text>
    <!-- tray icons -->
    <g fill="none" stroke="#fff" stroke-width="1.300">
      <path d="M1093 751l6-6 6 6"/>
      <rect x="1118.500" y="744.500" width="7" height="7" rx="2"/><path d="M1125.500 747l3.500-2v6l-3.500-2M1119 741.500c2-1.300 4.500-1.300 6.500 0M1119 754.500c2 1.300 4.500 1.300 6.500 0"/>
      <rect x="1143.500" y="744.500" width="11" height="7" fill="#fff" fill-opacity=".3"/><path d="M1155.500 746.500v3" /><path d="M1144.500 751l2-6h7v6z" fill="#fff" stroke="none"/>
      <path d="M1139 742.500v2.500M1142 742.500v2.500M1138 745.500h5v1.500c0 1.800-1 2.800-2.500 2.800s-2.500-1-2.500-2.800zM1140.500 750v3.500h3" stroke-width="1.100"/>
      <path d="M1166.500 753.500c0-6 4.500-10.500 10.500-10.500M1170 754c0-4 3-7 7-7M1173.300 754.300c0-2 1.500-3.600 3.700-3.600" opacity=".9"/><circle cx="1176.500" cy="753.700" r="1.400" fill="#fff" stroke="none"/>
      <path d="M1187.500 745.500h3l4-3.500v12l-4-3.500h-3z"/><path d="M1196.500 745.300c1.200 1.600 1.200 3.800 0 5.400M1199 743.300c2.200 2.800 2.200 6.600 0 9.400M1201.500 741.300c3.200 4 3.200 9.400 0 13.400"/>
    </g>
    <g font-size="12.500" fill="#fff" text-anchor="middle">
      <text x="1224.500" y="744" textLength="23" lengthAdjust="spacingAndGlyphs">ENG</text>
      <text x="1224.500" y="761" textLength="10" lengthAdjust="spacingAndGlyphs">IN</text>
      <text x="1277.500" y="743" textLength="49.500" lengthAdjust="spacingAndGlyphs">10:26 AM</text>
      <text x="1278" y="761" textLength="58.500" lengthAdjust="spacingAndGlyphs">26/10/2025</text>
    </g>
    <!-- notifications -->
    <path d="M1325 740h16v12h-9l-3 3.500v-3.500h-4z" fill="#fff"/>
    <path d="M1327.500 743h11M1327.500 746h11M1327.500 749h11" stroke="#1f2a33" stroke-width="1"/>
    <circle cx="1340.500" cy="755" r="7" fill="#1f2a33" stroke="#8a8f94" stroke-width="1"/>
    <text x="1340.500" y="759.500" font-size="11.500" fill="#fff" text-anchor="middle">3</text>
    <path d="M1361.500 728v40" stroke="#6a7178" stroke-width="1"/>
  </svg>
</div>

</div>
</body>
</html>
